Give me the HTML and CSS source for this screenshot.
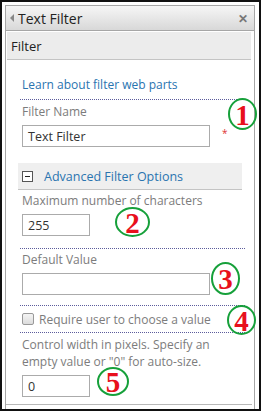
FILE: index.html
```html
<!DOCTYPE html>
<html>
<head>
<meta charset="utf-8">
<link rel="stylesheet" href="styles.css">
</head>
<body>
<div class="frame">
  <div class="panel">
    <div class="titlebar">
      <span class="tri"></span>
      <span class="title">Text Filter</span>
      <span class="close">&#x2715;</span>
    </div>
    <div class="band">Filter</div>
    <div class="content">
      <div class="row link-row"><a class="link">Learn about filter web parts</a></div>
      <div class="dots"></div>
      <div class="label l1">Filter Name</div>
      <div class="input-row">
        <div class="input wide">Text Filter</div>
        <span class="req">*</span>
      </div>
      <div class="adv">
        <span class="minus"></span>
        <span class="adv-text">Advanced Filter Options</span>
      </div>
      <div class="label l2">Maximum number of characters</div>
      <div class="input short">255</div>
      <div class="dots d2"></div>
      <div class="label l3">Default Value</div>
      <div class="input wide"></div>
      <div class="dots d3"></div>
      <div class="check-row"><span class="checkbox"></span><span class="label">Require user to choose a value</span></div>
      <div class="dots d4"></div>
      <div class="label multi">Control width in pixels. Specify an<br>empty value or "0" for auto-size.</div>
      <div class="input short">0</div>
    </div>
    <div class="bottomline"></div>
    <div class="mark m1">1</div>
    <div class="mark m2">2</div>
    <div class="mark m3">3</div>
    <div class="mark m4">4</div>
    <div class="mark m5">5</div>
  </div>
</div>
</body>
</html>
```
FILE: styles.css
```css
html, body { margin: 0; padding: 0; background: #fff; }
body { font-family: "Open Sans", "Noto Sans", sans-serif; font-size: 12px; color: #444; }
.frame {
  box-sizing: border-box;
  width: 261px; height: 411px;
  border: 2px solid #111;
  padding: 3px 4px 0 3px;
  overflow: hidden;
}
.panel {
  position: relative;
  border: 1px solid #a6a6a6;
  border-bottom: none;
  height: 420px;
}
.titlebar {
  height: 24px;
  border-bottom: 1px solid #a6a6a6;
  background: linear-gradient(#f6f6f6, #d8d8d8);
  display: flex; align-items: center;
}
.tri {
  width: 0; height: 0;
  border-top: 4px solid transparent; border-bottom: 4px solid transparent;
  border-right: 4px solid #888;
  margin-left: 4px; margin-right: 4px;
}
.title { font-size: 14px; color: #222; flex: 1; }
.close { font-size: 12px; color: #777; font-weight: bold; margin-right: 6px; }
.band {
  margin: 1px 3px 0 1px;
  height: 28px;
  box-sizing: border-box;
  background: #ececec;
  border-bottom: 1px solid #c4c4c4;
  padding-left: 4px;
  font-size: 13px; color: #222;
  display: flex; align-items: center;
}
.content { padding: 0 12px 0 12px; }
.link-row { height: 39px; display: flex; align-items: flex-end; padding-left: 4px; }
.link { color: #2a74b0; font-size: 12px; line-height: 18px; padding-bottom: 5px; }
.dots { border-top: 1px dotted #5c5c9c; margin-left: 2px; margin-right: -3px; }
.label { color: #7c7c7c; font-size: 12px; line-height: 17px; padding-left: 4px; }
.l1 { margin-top: 3px; }
.input-row { display: flex; align-items: center; margin-top: 5px; }
.input {
  box-sizing: border-box;
  border: 1px solid #ababab;
  height: 22px;
  margin-left: 4px;
  padding-left: 5px;
  font-size: 12.5px; color: #333;
  display: flex; align-items: center;
  background: #fff;
}
.wide { width: 188px; }
.short { width: 68px; }
.req { color: #d33; font-size: 10px; margin-left: 12px; margin-top: -6px; }
.adv {
  margin-top: 16px;
  height: 27px;
  box-sizing: border-box;
  background: #efefef;
  border-bottom: 1px solid #c4c4c4;
  display: flex; align-items: center;
}
.minus {
  width: 9px; height: 9px;
  border: 1px solid #555;
  margin-left: 4px; margin-right: 11px;
  position: relative;
  background: #fff;
}
.minus::after {
  content: ""; position: absolute; left: 2px; right: 2px; top: 4px; height: 1px; background: #222;
}
.adv-text { color: #2a74b0; font-size: 12.5px; }
.l2 { margin-top: 2px; }
.short { margin-top: 5px; }
.d2 { margin-top: 12px; }
.l3 { margin-top: 2px; }
.l3 + .input { margin-top: 5px; }
.d3 { margin-top: 10px; }
.check-row { display: flex; align-items: center; height: 26px; padding-left: 4px; }
.checkbox {
  width: 10px; height: 10px;
  border: 1px solid #999;
  border-radius: 2px;
  background: linear-gradient(#f4f4f4, #dcdcdc);
  margin-right: 1px;
}
.multi { margin-top: 3px; line-height: 17px; }
.multi + .input { margin-top: 5px; }
.bottomline {
  position: absolute; left: 0; right: 2px; top: 398px;
  border-top: 1px solid #b8b8b8;
}
.mark {
  position: absolute;
  box-sizing: border-box;
  border: 2.5px solid #16a03a;
  border-radius: 50%;
  color: #e8101c;
  font-family: "Liberation Serif", "DejaVu Serif", serif;
  font-weight: bold;
  font-size: 29px;
  display: flex; align-items: center; justify-content: center;
  line-height: 1;
  padding-top: 2px;
}
.m1 { left: 222px; top: 92px; width: 29px; height: 32px; }
.m2 { left: 109px; top: 201px; width: 35px; height: 30px; }
.m3 { left: 205px; top: 256px; width: 29px; height: 33px; }
.m4 { left: 221px; top: 299px; width: 29px; height: 30px; }
.m5 { left: 91px; top: 361px; width: 32px; height: 29px; }
```
